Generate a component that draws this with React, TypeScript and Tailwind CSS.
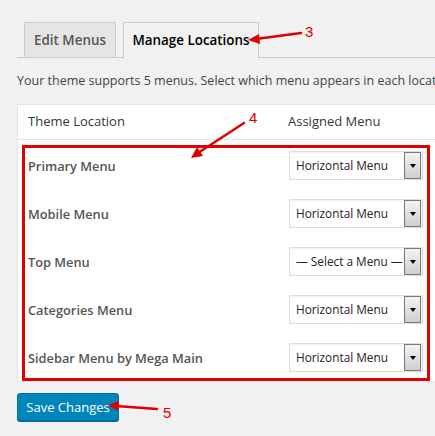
const locations = [
  { name: "Primary Menu", menu: "Horizontal Menu" },
  { name: "Mobile Menu", menu: "Horizontal Menu" },
  { name: "Top Menu", menu: "— Select a Menu —" },
  { name: "Categories Menu", menu: "Horizontal Menu" },
  { name: "Sidebar Menu by Mega Main", menu: "Horizontal Menu" },
]

function MenuSelect({ value }: { value: string }) {
  return (
    <div className="flex items-center h-[29px] w-[134px] bg-white border border-[#ddd] shadow-[inset_0_1px_2px_rgba(0,0,0,0.07)] pl-[6px] pr-[1px]">
      <span className="flex-1 text-[11.8px] text-[#222] whitespace-nowrap">{value}</span>
      <span className="flex items-center justify-center w-[17px] h-[27px] border border-[#777] bg-gradient-to-b from-[#f4f4f4] to-[#cfcfcf]">
        <span className="w-0 h-0 border-l-[3.5px] border-r-[3.5px] border-t-[4px] border-l-transparent border-r-transparent border-t-black" />
      </span>
    </div>
  )
}

export default function App() {
  return (
    <main className="relative w-[435px] h-[436px] overflow-hidden bg-[#f1f1f1] pt-[22px] pl-[17px] font-['Open_Sans',sans-serif] text-[#444]">
      {/* tabs */}
      <div className="flex gap-[7px] pl-[7px] border-b border-[#ccc] h-[36px]">
        <div className="h-[35px] w-[92px] justify-center flex items-center bg-[#e5e5e5] border border-[#ccc] border-b-0 text-[13.4px] font-semibold text-[#555]">
          Edit Menus
        </div>
        <div className="h-[36px] w-[136px] justify-center flex items-center pb-[1px] bg-[#f1f1f1] border border-[#ccc] border-b-0 text-[13.4px] font-semibold text-black">
          Manage Locations
        </div>
      </div>

      <p className="mt-[13px] text-[12.5px] leading-[20px] whitespace-nowrap text-[#444]">
        Your theme supports 5 menus. Select which menu appears in each location.
      </p>

      {/* table */}
      <div className="mt-[13px] w-[440px] bg-white border border-[#e5e5e5] border-r-0">
        <div className="flex items-center h-[35px] border-b border-[#e1e1e1] text-[13px] text-[#32373c]">
          <span className="pl-[10px] w-[270px]">Theme Location</span>
          <span>Assigned Menu</span>
        </div>
        <div className="ml-[4px] mt-[5px] w-[408px] border-[3px] border-[#e00000] pt-[3px] pb-[6px] pl-[3px] pr-[4px] flex flex-col gap-[19px]">
          {locations.map((loc) => (
            <div key={loc.name} className="flex items-center justify-between">
              <span className="text-[12.8px] font-semibold text-[#555] pt-[2px]">{loc.name}</span>
              <MenuSelect value={loc.menu} />
            </div>
          ))}
        </div>
      </div>

      <button className="mt-[11px] h-[28px] w-[102px] rounded-[3px] bg-[#0085ba] border border-[#0073aa] shadow-[0_1px_0_#006799] text-white text-[13px] leading-none">
        Save Changes
      </button>

      {/* annotations */}
      <svg className="absolute inset-0 pointer-events-none" width="435" height="436">
        <g stroke="#e00000" strokeWidth="2.5" strokeLinecap="round" fill="#e00000">
          <line x1="301" y1="33" x2="256" y2="39" />
          <polygon points="248,40 259,34 260,44" stroke="none" />
          <line x1="244" y1="123" x2="198" y2="153" />
          <polygon points="191,158 197,147 203,156" stroke="none" />
          <line x1="157" y1="409" x2="116" y2="406" />
          <polygon points="108,405 119,401 118,411" stroke="none" />
        </g>
      </svg>
      <span className="absolute left-[305px] top-[21px] text-[15px] text-[#e00000] font-['Liberation_Sans',sans-serif]">3</span>
      <span className="absolute left-[249px] top-[107px] text-[15px] text-[#e00000] font-['Liberation_Sans',sans-serif]">4</span>
      <span className="absolute left-[163px] top-[402px] text-[15px] text-[#e00000] font-['Liberation_Sans',sans-serif]">5</span>
    </main>
  )
}
